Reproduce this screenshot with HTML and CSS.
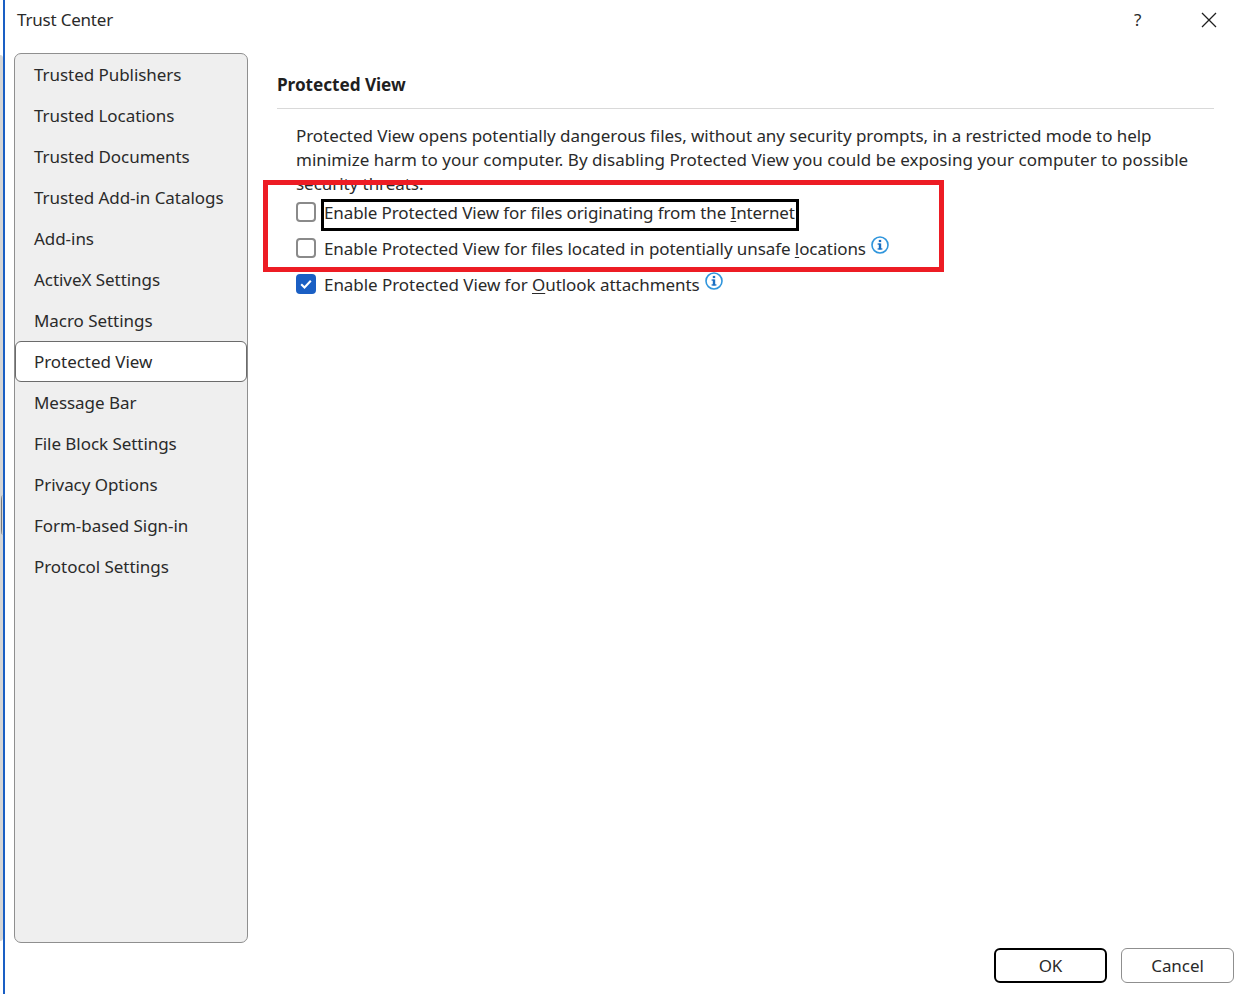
FILE: index.html
```html
<!DOCTYPE html>
<html lang="en">
<head>
<meta charset="utf-8">
<title>Trust Center</title>
<link rel="stylesheet" href="styles.css">
</head>
<body>
<div class="backdrop"></div>
<div class="window">
  <header class="titlebar">
    <div class="title">Trust Center</div>
    <div class="help">?</div>
    <svg class="close" width="16" height="16" viewBox="0 0 16 16"><path d="M1 1l14 14M15 1L1 15" fill="none" stroke="#1f1f1f" stroke-width="1.3"/></svg>
  </header>
  <div class="body">
    <nav class="sidebar">
      <div class="item">Trusted Publishers</div>
      <div class="item">Trusted Locations</div>
      <div class="item">Trusted Documents</div>
      <div class="item">Trusted Add-in Catalogs</div>
      <div class="item">Add-ins</div>
      <div class="item">ActiveX Settings</div>
      <div class="item">Macro Settings</div>
      <div class="item selected">Protected View</div>
      <div class="item">Message Bar</div>
      <div class="item">File Block Settings</div>
      <div class="item">Privacy Options</div>
      <div class="item">Form-based Sign-in</div>
      <div class="item">Protocol Settings</div>
    </nav>
    <main class="content">
      <h1 class="heading">Protected View</h1>
      <p class="intro">Protected View opens potentially dangerous files, without any security prompts, in a restricted mode to help<br><span class="wide">minimize harm to your computer. By disabling Protected View you could be exposing your computer to possible</span><br>security threats.</p>
      <div class="options">
        <div class="option">
          <span class="check"></span>
          <span class="label focused tight">Enable Protected View for files originating from the <u>I</u>nternet</span>
        </div>
        <div class="option">
          <span class="check"></span>
          <span class="label snug">Enable Protected View for files located in potentially unsafe <u>l</u>ocations</span>
          <svg class="info" width="18" height="18" viewBox="0 0 18 18"><circle cx="9" cy="9" r="8" fill="#fff" stroke="#2f95dc" stroke-width="1.6"/><rect x="7.8" y="7.4" width="2.4" height="6" fill="#1b6fc2"/><rect x="6.6" y="7.4" width="2" height="1.3" fill="#1b6fc2"/><rect x="6.6" y="12.3" width="4.8" height="1.3" fill="#1b6fc2"/><rect x="7.8" y="3.9" width="2.4" height="2.2" fill="#1b6fc2"/></svg>
        </div>
        <div class="option">
          <span class="check checked"><svg width="20" height="20" viewBox="0 0 20 20"><path d="M5.2 10.2l3.3 3.2 6.3-6.6" fill="none" stroke="#fff" stroke-width="2.1"/></svg></span>
          <span class="label">Enable Protected View for <u>O</u>utlook attachments</span>
          <svg class="info" width="18" height="18" viewBox="0 0 18 18"><circle cx="9" cy="9" r="8" fill="#fff" stroke="#2f95dc" stroke-width="1.6"/><rect x="7.8" y="7.4" width="2.4" height="6" fill="#1b6fc2"/><rect x="6.6" y="7.4" width="2" height="1.3" fill="#1b6fc2"/><rect x="6.6" y="12.3" width="4.8" height="1.3" fill="#1b6fc2"/><rect x="7.8" y="3.9" width="2.4" height="2.2" fill="#1b6fc2"/></svg>
        </div>
      </div>
      <div class="actions">
        <button class="btn primary">OK</button>
        <button class="btn">Cancel</button>
      </div>
    </main>
  </div>
</div>
<div class="annotation"></div>
</body>
</html>
```
FILE: styles.css
```css
* { box-sizing: border-box; }
html, body { margin: 0; height: 100%; }
body {
  width: 1243px;
  height: 994px;
  overflow: hidden;
  background: #fff;
  color: #2a2a2a;
  font-family: "Noto Sans", "Open Sans", sans-serif;
  font-size: 17px;
  letter-spacing: -0.05px;
  position: relative;
  display: flex;
}
.backdrop {
  width: 3px;
  height: 886px;
  margin-top: 55px;
  background: #d6d6d6;
  border-radius: 0 5px 5px 0;
  flex: none;
  position: relative;
}
.backdrop::after {
  content: "";
  position: absolute;
  left: 1px;
  top: 440px;
  width: 2px;
  height: 40px;
  border-left: 1px solid #777;
  border-radius: 2px / 8px;
}
.window {
  flex: 1;
  height: 994px;
  border-left: 2px solid #1a5fc4;
  display: flex;
  flex-direction: column;
  background: #fff;
}
.titlebar {
  height: 53px;
  padding: 7px 26px 0 12px;
  display: flex;
  align-items: flex-start;
}
.title { line-height: 26px; flex: 1; letter-spacing: -0.2px; }
.help { line-height: 26px; width: 67px; }
.close { margin-top: 5px; }
.body { flex: 1; display: flex; padding: 0 9px 11px 9px; }
.sidebar {
  width: 234px;
  height: 890px;
  flex: none;
  background: #efefef;
  border: 1px solid #8f8f8f;
  border-radius: 7px;
}
.item {
  height: 41px;
  line-height: 41px;
  padding-left: 19px;
  white-space: nowrap;
}
.item.selected {
  background: #fff;
  border: 1px solid #6b6b6b;
  border-radius: 6px;
  line-height: 39px;
  padding-left: 18px;
}
.content { flex: 1; padding-left: 29px; display: flex; flex-direction: column; }
.heading {
  margin: 0 20px 0 0;
  height: 56px;
  padding-top: 18px;
  line-height: 28px;
  font-size: 17.2px;
  font-weight: 700;
  color: #1f1f1f;
  border-bottom: 1px solid #d9d9d9;
}
.intro {
  margin: 15px 0 0 19px;
  line-height: 24px;
  white-space: nowrap;
  height: 72px;
}
.wide { letter-spacing: 0.03px; }
.options { margin-left: 19px; margin-top: -2px; display: flex; flex-direction: column; }
.option { height: 36px; display: flex; align-items: center; white-space: nowrap; }
.check {
  width: 20px;
  height: 20px;
  border: 2px solid #8a8a8a;
  border-radius: 4px;
  background: #fff;
  flex: none;
  margin-right: 8px;
}
.check.checked { background: #1a5fc4; border: 0; }
.check svg { display: block; }
.label { line-height: 25px; }
.tight { letter-spacing: -0.11px; }
.snug { letter-spacing: -0.08px; }
.label u { text-underline-offset: 2px; text-decoration-thickness: 1px; }
.label.focused { position: relative; }
.label.focused::after {
  content: "";
  position: absolute;
  left: -3px;
  right: -4px;
  top: -1px;
  bottom: -6px;
  border: 3px solid #000;
}
.info { margin-left: 5px; margin-top: -7px; flex: none; }
.actions {
  margin-top: auto;
  display: flex;
  justify-content: flex-end;
  gap: 14px;
}
.btn {
  width: 113px;
  height: 35px;
  background: #fff;
  border: 1px solid #8f8f8f;
  border-radius: 6px;
  font: inherit;
  letter-spacing: inherit;
  color: #2a2a2a;
  padding: 0;
}
.btn.primary { border: 2px solid #000; }
.annotation {
  position: absolute;
  left: 263px;
  top: 180px;
  width: 681px;
  height: 92px;
  border: 5px solid #ed1c24;
  pointer-events: none;
}
```
